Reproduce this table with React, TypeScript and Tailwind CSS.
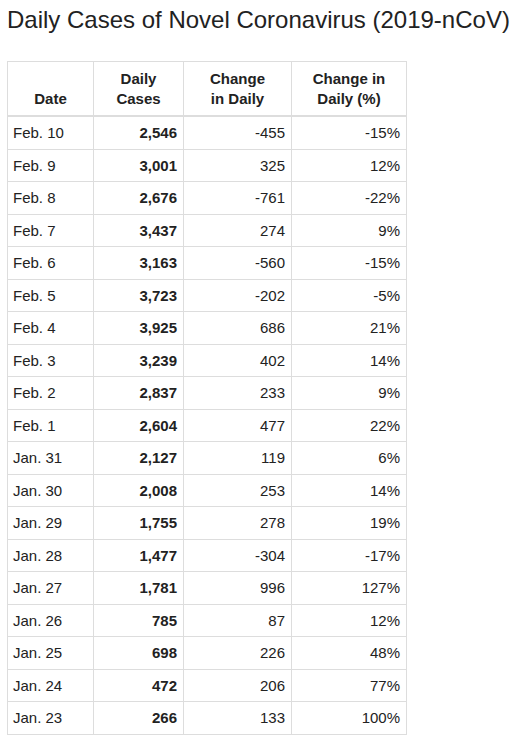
const rows: [string, string, string, string][] = [
  ['Feb. 10', '2,546', '-455', '-15%'],
  ['Feb. 9', '3,001', '325', '12%'],
  ['Feb. 8', '2,676', '-761', '-22%'],
  ['Feb. 7', '3,437', '274', '9%'],
  ['Feb. 6', '3,163', '-560', '-15%'],
  ['Feb. 5', '3,723', '-202', '-5%'],
  ['Feb. 4', '3,925', '686', '21%'],
  ['Feb. 3', '3,239', '402', '14%'],
  ['Feb. 2', '2,837', '233', '9%'],
  ['Feb. 1', '2,604', '477', '22%'],
  ['Jan. 31', '2,127', '119', '6%'],
  ['Jan. 30', '2,008', '253', '14%'],
  ['Jan. 29', '1,755', '278', '19%'],
  ['Jan. 28', '1,477', '-304', '-17%'],
  ['Jan. 27', '1,781', '996', '127%'],
  ['Jan. 26', '785', '87', '12%'],
  ['Jan. 25', '698', '226', '48%'],
  ['Jan. 24', '472', '206', '77%'],
  ['Jan. 23', '266', '133', '100%'],
]

export default function App() {
  return (
    <div className="bg-white min-h-screen px-[7px] pt-[5px] text-[#222] font-['Liberation_Sans',Arial,sans-serif]">
      <h1 className="text-[24px] leading-[30px] font-normal">Daily Cases of Novel Coronavirus (2019-nCoV)</h1>
      <table className="mt-[26px] border-collapse text-[15px]">
        <colgroup>
          <col className="w-[86px]" />
          <col className="w-[90px]" />
          <col className="w-[108px]" />
          <col className="w-[115px]" />
        </colgroup>
        <thead>
          <tr>
            <th className="border border-[#ddd] border-b-2 align-bottom text-center font-bold leading-[20px] pt-[7px] pb-[6px] px-[6px]">Date</th>
            <th className="border border-[#ddd] border-b-2 align-bottom text-center font-bold leading-[20px] pt-[7px] pb-[6px] px-[6px]">Daily<br />Cases</th>
            <th className="border border-[#ddd] border-b-2 align-bottom text-center font-bold leading-[20px] pt-[7px] pb-[6px] px-[6px]">Change<br />in Daily</th>
            <th className="border border-[#ddd] border-b-2 align-bottom text-center font-bold leading-[20px] pt-[7px] pb-[6px] px-[6px]">Change in<br />Daily (%)</th>
          </tr>
        </thead>
        <tbody>
          {rows.map(r => (
            <tr key={r[0]}>
              <td className="border border-[#ddd] pl-[5px] pr-[6px] py-[6px] leading-[19.5px] text-left">{r[0]}</td>
              <td className="border border-[#ddd] px-[6px] py-[6px] leading-[19.5px] text-right font-bold">{r[1]}</td>
              <td className="border border-[#ddd] px-[6px] py-[6px] leading-[19.5px] text-right">{r[2]}</td>
              <td className="border border-[#ddd] px-[6px] py-[6px] leading-[19.5px] text-right">{r[3]}</td>
            </tr>
          ))}
        </tbody>
      </table>
    </div>
  )
}
